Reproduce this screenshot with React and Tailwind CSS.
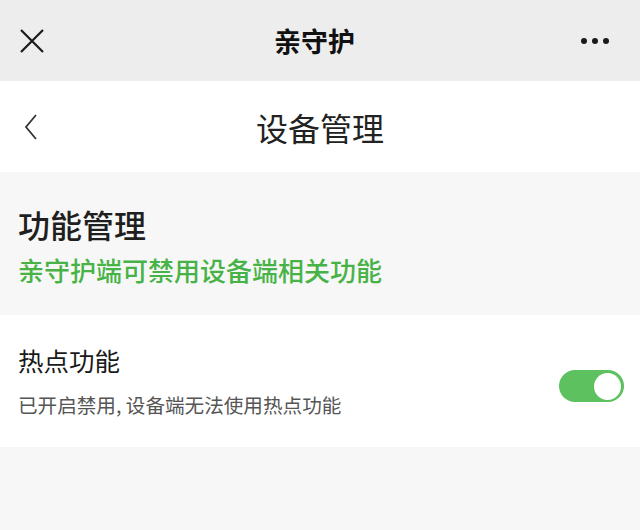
import React from 'react';

const font = { fontFamily: '"Noto Sans CJK SC", "Noto Sans", sans-serif' };

const Toggle = ({ on }) => (
  <div className={`w-[65px] h-[32px] rounded-full flex items-center px-[3px] ${on ? 'bg-[#5dc15f] justify-end' : 'bg-gray-300 justify-start'}`}>
    <div className="w-[27px] h-[27px] rounded-full bg-white" />
  </div>
);

const App = () => {
  return (
    <div className="w-[640px] h-[530px] bg-[#f7f7f7] flex flex-col" style={font}>
      <div className="h-[81px] bg-[#ededed] flex items-center justify-between px-[20px]">
        <svg width="24" height="24" viewBox="0 0 24 24" className="text-[#1a1a1a]">
          <path d="M1 1 L23 23 M23 1 L1 23" stroke="currentColor" strokeWidth="2.2" fill="none" />
        </svg>
        <div className="text-[27px] font-bold text-[#111] leading-none pl-[4px]">亲守护</div>
        <div className="flex gap-[5px] pr-[11px]">
          <span className="w-[6px] h-[6px] rounded-full bg-[#1a1a1a]" />
          <span className="w-[6px] h-[6px] rounded-full bg-[#1a1a1a]" />
          <span className="w-[6px] h-[6px] rounded-full bg-[#1a1a1a]" />
        </div>
      </div>

      <div className="h-[91px] bg-white flex items-center relative">
        <svg width="14" height="26" viewBox="0 0 14 26" className="ml-[24px] text-[#333]">
          <path d="M12 1 L2 13 L12 25" stroke="currentColor" strokeWidth="1.8" fill="none" />
        </svg>
        <div className="absolute left-0 right-0 text-center text-[32px] text-[#222] leading-none pointer-events-none">设备管理</div>
      </div>

      <div className="h-[143px] px-[18px] pt-[36px]">
        <div className="text-[32px] font-medium text-[#1f1f1f] leading-none">功能管理</div>
        <div className="mt-[17px] text-[26px] font-medium text-[#47b347] leading-none">亲守护端可禁用设备端相关功能</div>
      </div>

      <div className="h-[132px] bg-white px-[18px] flex items-center justify-between">
        <div>
          <div className="text-[25.5px] text-[#1a1a1a] leading-none">热点功能</div>
          <div className="mt-[23px] text-[19.6px] text-[#555] leading-none">已开启禁用, 设备端无法使用热点功能</div>
        </div>
        <div className="mr-[-2px] mt-[10px]">
          <Toggle on />
        </div>
      </div>
    </div>
  );
};

export default App;
